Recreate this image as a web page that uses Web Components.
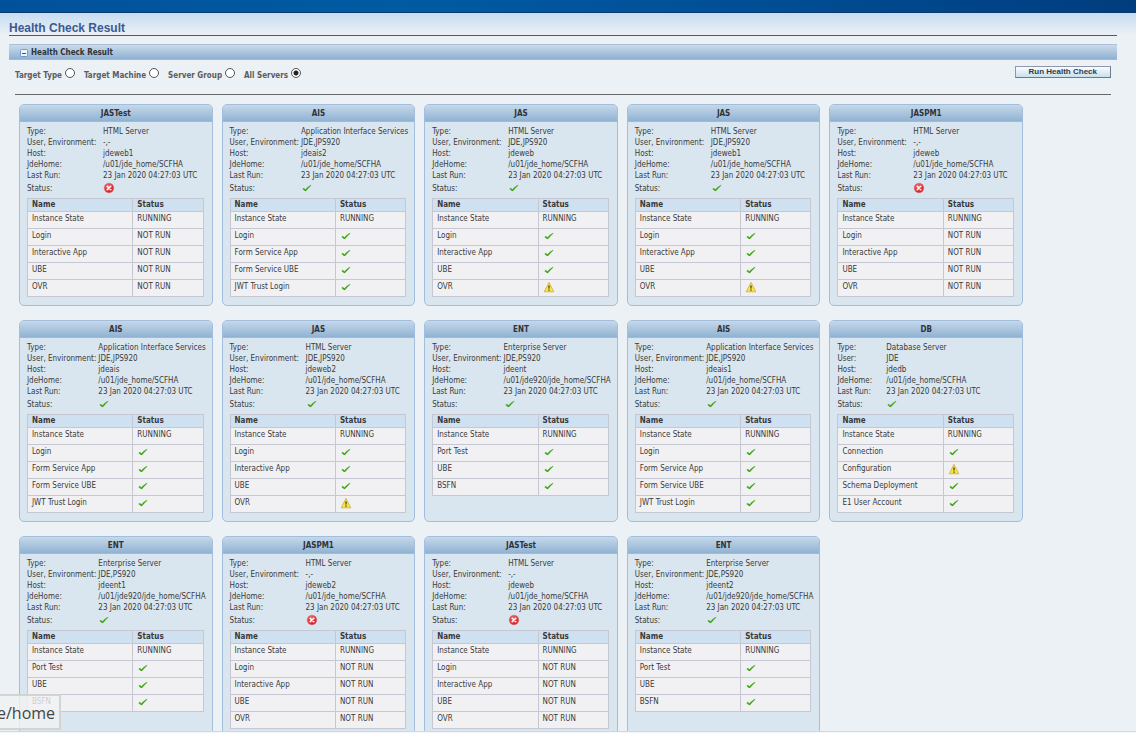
<!DOCTYPE html>
<html lang="en">
<head>
<meta charset="utf-8">
<title>Health Check Result</title>
<style>
  html, body { margin: 0; height: 100%; }
  body {
    background: #ebf1f5;
    color: #3a3a3a;
    font-family: "DejaVu Sans Condensed", "DejaVu Sans", sans-serif;
    font-size: 8px;
  }
</style>
</head>
<body>
<health-app></health-app>

<script>
const define = (name, html, setup) => {
  const template = document.createElement('template');
  template.innerHTML = html;
  customElements.define(name, class extends HTMLElement {
    constructor() {
      super();
      this.attachShadow({ mode: 'open' }).append(template.content.cloneNode(true));
    }
    connectedCallback() { if (setup) setup(this, this.shadowRoot); }
  });
};

/* ---------- status icons ---------- */
const ICONS = {
  ok: `<svg viewBox="0 0 12 12" role="img" aria-label="Passed"><path d="M1.6 6.9 L2.9 6.1 L4.3 7.4 Q6.7 4.6 9.9 3 L10.2 3.4 Q7.5 5.8 5 8.9 L4 9 Z" fill="#3da512" stroke="#3da512" stroke-width=".2" stroke-linejoin="round"/></svg>`,
  error: `<svg viewBox="0 0 12 12" role="img" aria-label="Failed"><defs><radialGradient id="g" cx=".4" cy=".3" r=".7"><stop offset="0" stop-color="#f06a6a"/><stop offset="1" stop-color="#cf1f24"/></radialGradient></defs><circle cx="6" cy="6" r="4.8" fill="url(#g)" stroke="#d8686a" stroke-width=".5"/><path d="M4.2 4.2 L7.8 7.8 M7.8 4.2 L4.2 7.8" stroke="#fff" stroke-width="1.5" stroke-linecap="round"/></svg>`,
  warn: `<svg viewBox="0 0 12 12" role="img" aria-label="Warning"><path d="M6 1.4 L10.8 10.8 H1.2 Z" fill="#f8e83c" stroke="#d2b565" stroke-width="1" stroke-linejoin="round"/><path d="M5.2 4.4 H6.8 L6.5 7.8 H5.5 Z M5.3 8.5 H6.7 V9.8 H5.3 Z" fill="#4a4720"/></svg>`
};
define('status-icon', `
  <style>
    :host { display: inline-block; width: 12px; height: 12px; vertical-align: top; }
    svg { display: block; width: 100%; height: 100%; }
  </style>`,
  (host, root) => root.append(document.createRange().createContextualFragment(ICONS[host.getAttribute('kind')])));

/* ---------- one server ---------- */
define('server-card', `
  <style>
    :host {
      display: block; box-sizing: border-box; min-width: 0; min-height: 202px;
      border: 1px solid #a3bedd; border-radius: 5px; background: #d9e6ef; overflow: hidden;
    }
    h3 {
      margin: 0; height: 16px; line-height: 18px; text-align: center; font-size: 8px; font-weight: bold;
      background: linear-gradient(#c6d8e9, #9bbad8 80%, #8fb2d3); border-bottom: 1px solid #9fbbd9; color: #2f3338;
    }
    .body { padding: 4px 8px 8px 7px; }
    table { width: 100%; border-spacing: 0; font-size: 8px; }
    .info { line-height: 11px; }
    .info th, .info td { padding: 0; text-align: left; font-weight: normal; white-space: nowrap; }
    .info td { padding-left: 2px; }
    .info .state th, .info .state td { height: 14px; padding-bottom: 2px; vertical-align: middle; }
    .checks { margin-top: 1px; border-collapse: collapse; table-layout: fixed; background: #f1f1f4; }
    .checks th, .checks td { border: 1px solid #c5c8d2; text-align: left; padding: 0 4px; }
    .checks thead th { line-height: 12px; background: #cfe0f0; }
    .checks thead th:first-child { width: 60%; box-sizing: border-box; }
    .checks tbody th { font-weight: normal; }
    .checks tbody th, .checks tbody td { line-height: 14px; padding-bottom: 2px; vertical-align: top; }
    .checks status-icon { margin-top: 1px; }
  </style>
  <h3></h3>
  <div class="body">
    <table class="info"><tbody></tbody></table>
    <table class="checks">
      <thead><tr><th scope="col">Name</th><th scope="col">Status</th></tr></thead>
      <tbody></tbody>
    </table>
  </div>`,
  (host, root) => {
    const d = host.data;
    const cell = v => ICONS[v] ? `<status-icon kind="${v}"></status-icon>` : v;
    root.querySelector('h3').textContent = d.name;
    root.querySelector('.info tbody').innerHTML = [
      ['Type:', d.type], [d.type === 'Database Server' ? 'User:' : 'User, Environment:', d.user],
      ['Host:', d.host], ['JdeHome:', d.home], ['Last Run:', '23 Jan 2020 04:27:03 UTC'], ['Status:', d.status]
    ].map(([k, v]) => `<tr${k === 'Status:' ? ' class="state"' : ''}><th scope="row">${k}</th><td>${cell(v)}</td></tr>`).join('');
    root.querySelector('.checks tbody').innerHTML = [['Instance State', 'RUNNING'], ...d.checks]
      .map(([k, v]) => `<tr><th scope="row">${k}</th><td>${cell(v)}</td></tr>`).join('');
  });

/* ---------- grid of servers ---------- */
const HOME = '/u01/jde_home/SCFHA', ENT_HOME = '/u01/jde920/jde_home/SCFHA';
const all = (names, state, last) => names.map((n, i) => [n, last && i === names.length - 1 ? last : state]);
const WEB = ['Login', 'Interactive App', 'UBE', 'OVR'];
const FORM = ['Login', 'Form Service App', 'Form Service UBE', 'JWT Trust Login'];
const KERNEL = ['Port Test', 'UBE', 'BSFN'];
const html = (name, host, ok) => ({
  name, host, type: 'HTML Server', user: ok ? 'JDE,JPS920' : '-,-', home: HOME,
  status: ok ? 'ok' : 'error', checks: ok ? all(WEB, 'ok', 'warn') : all(WEB, 'NOT RUN')
});
const ais = host => ({ name: 'AIS', host, type: 'Application Interface Services', user: 'JDE,JPS920', home: HOME, status: 'ok', checks: all(FORM, 'ok') });
const ent = host => ({ name: 'ENT', host, type: 'Enterprise Server', user: 'JDE,PS920', home: ENT_HOME, status: 'ok', checks: all(KERNEL, 'ok') });
const SERVERS = [
  html('JASTest', 'jdeweb1', false), ais('jdeais2'), html('JAS', 'jdeweb', true), html('JAS', 'jdeweb1', true), html('JASPM1', 'jdeweb', false),
  ais('jdeais'), html('JAS', 'jdeweb2', true), ent('jdeent'), ais('jdeais1'),
  { name: 'DB', host: 'jdedb', type: 'Database Server', user: 'JDE', home: HOME, status: 'ok',
    checks: [['Connection', 'ok'], ['Configuration', 'warn'], ['Schema Deployment', 'ok'], ['E1 User Account', 'ok']] },
  ent('jdeent1'), html('JASPM1', 'jdeweb2', false), html('JASTest', 'jdeweb', false), ent('jdeent2')
];
define('server-grid', `
  <style>
    :host { display: grid; grid-template-columns: repeat(5, minmax(0, 1fr)); gap: 14px 9px; }
  </style>`,
  (host, root) => SERVERS.forEach(s => {
    const card = document.createElement('server-card');
    card.data = s;
    root.append(card);
  }));

/* ---------- titled, collapsible section ---------- */
define('collapse-section', `
  <style>
    :host { display: block; }
    header {
      display: flex; align-items: center; height: 14px; padding-left: 11px; gap: 3px;
      border-top: 1px solid #a9c0df; border-bottom: 1px solid #9dbbdc;
      background: linear-gradient(#cbdbe9, #8fb0d4);
    }
    h2 { margin: 0; padding-top: 2px; font-size: 8px; line-height: 12px; font-weight: bold; color: #2f3338; }
    button { margin: 2px 0 0; padding: 0; border: 0; background: none; width: 8px; height: 8px; }
    svg { display: block; }
  </style>
  <header>
    <button type="button" aria-label="Collapse"><svg width="8" height="8" viewBox="0 0 8 8"><rect x=".5" y=".5" width="7" height="7" rx="1" fill="#eef6fd" stroke="#6f9cc8"/><path d="M2 4.5 H6" stroke="#33557f"/></svg></button>
    <h2><slot name="title"></slot></h2>
  </header>
  <slot></slot>`);

/* ---------- target filter and run button ---------- */
define('target-filter', `
  <style>
    :host { display: flex; align-items: flex-start; justify-content: space-between; height: 28px; padding-top: 6px; border-bottom: 1px solid #6a6866; }
    fieldset { display: flex; gap: 9px; margin: 0; padding: 0; border: 0; min-width: 0; }
    label { display: flex; gap: 3px; font-weight: bold; line-height: 10px; padding-top: 5px; color: #5c5c5c; }
    input {
      appearance: none; box-sizing: border-box; width: 10px; height: 10px; margin: -3px 0 0;
      border: 1px solid #555; border-radius: 50%; background: #fff;
    }
    input:checked { background: radial-gradient(circle, #222 0 2px, #fff 3px); }
    button {
      box-sizing: border-box; height: 12px; padding: 0 13px; border: 1px solid #8f96ad; border-right-color: #6f7690; border-bottom-color: #6f7690;
      background: linear-gradient(#fafcfe, #c8e0ee); font: bold 8px/10px "Liberation Sans", Arial, sans-serif; color: #333a44;
    }
  </style>
  <fieldset aria-label="Target">
    <label>Target Type<input type="radio" name="target"></label>
    <label>Target Machine<input type="radio" name="target"></label>
    <label>Server Group<input type="radio" name="target"></label>
    <label>All Servers<input type="radio" name="target" checked></label>
  </fieldset>
  <button type="button">Run Health Check</button>`);

/* ---------- link preview ---------- */
define('link-preview', `
  <style>
    :host {
      position: absolute; left: -16px; bottom: 3px; box-sizing: border-box; height: 36px; padding: 0 4px 0 11px;
      border: 2px solid rgba(200, 200, 194, .7); background: rgba(240, 242, 243, .8);
      font: 16px/34px "Open Sans", sans-serif; color: #454545;
    }
  </style>
  <slot></slot>`);

/* ---------- page ---------- */
define('health-app', `
  <style>
    :host { display: flex; flex-direction: column; height: 100%; position: relative; overflow: hidden; }
    .brand { flex: none; height: 12px; background: linear-gradient(90deg, #00519b, #005ba3 35%, #004f96 65%, #003d7e); border-bottom: 1px solid #0b3a6c; }
    main { flex: 1; min-height: 0; overflow: hidden; padding: 9px 19px 0 9px; background: linear-gradient(#c6dcf3, #ebf1f5 22px); }
    h1 { margin: 0 0 8px; font: bold 12px/13px "Liberation Sans", Arial, sans-serif; color: #3b5a91; border-bottom: 1px solid #3b5a91; }
    target-filter { margin: 0 6px; }
    server-grid { margin: 9px 94px 0 10px; }
    footer { flex: none; height: 1px; border-top: 1px solid #d3d8dc; background: #f4f7f9; }
  </style>
  <div class="brand"></div>
  <main>
    <h1>Health Check Result</h1>
    <collapse-section>
      <span slot="title">Health Check Result</span>
      <target-filter></target-filter>
      <server-grid></server-grid>
    </collapse-section>
  </main>
  <footer></footer>
  <link-preview>e/home</link-preview>`);
</script>
</body>
</html>
